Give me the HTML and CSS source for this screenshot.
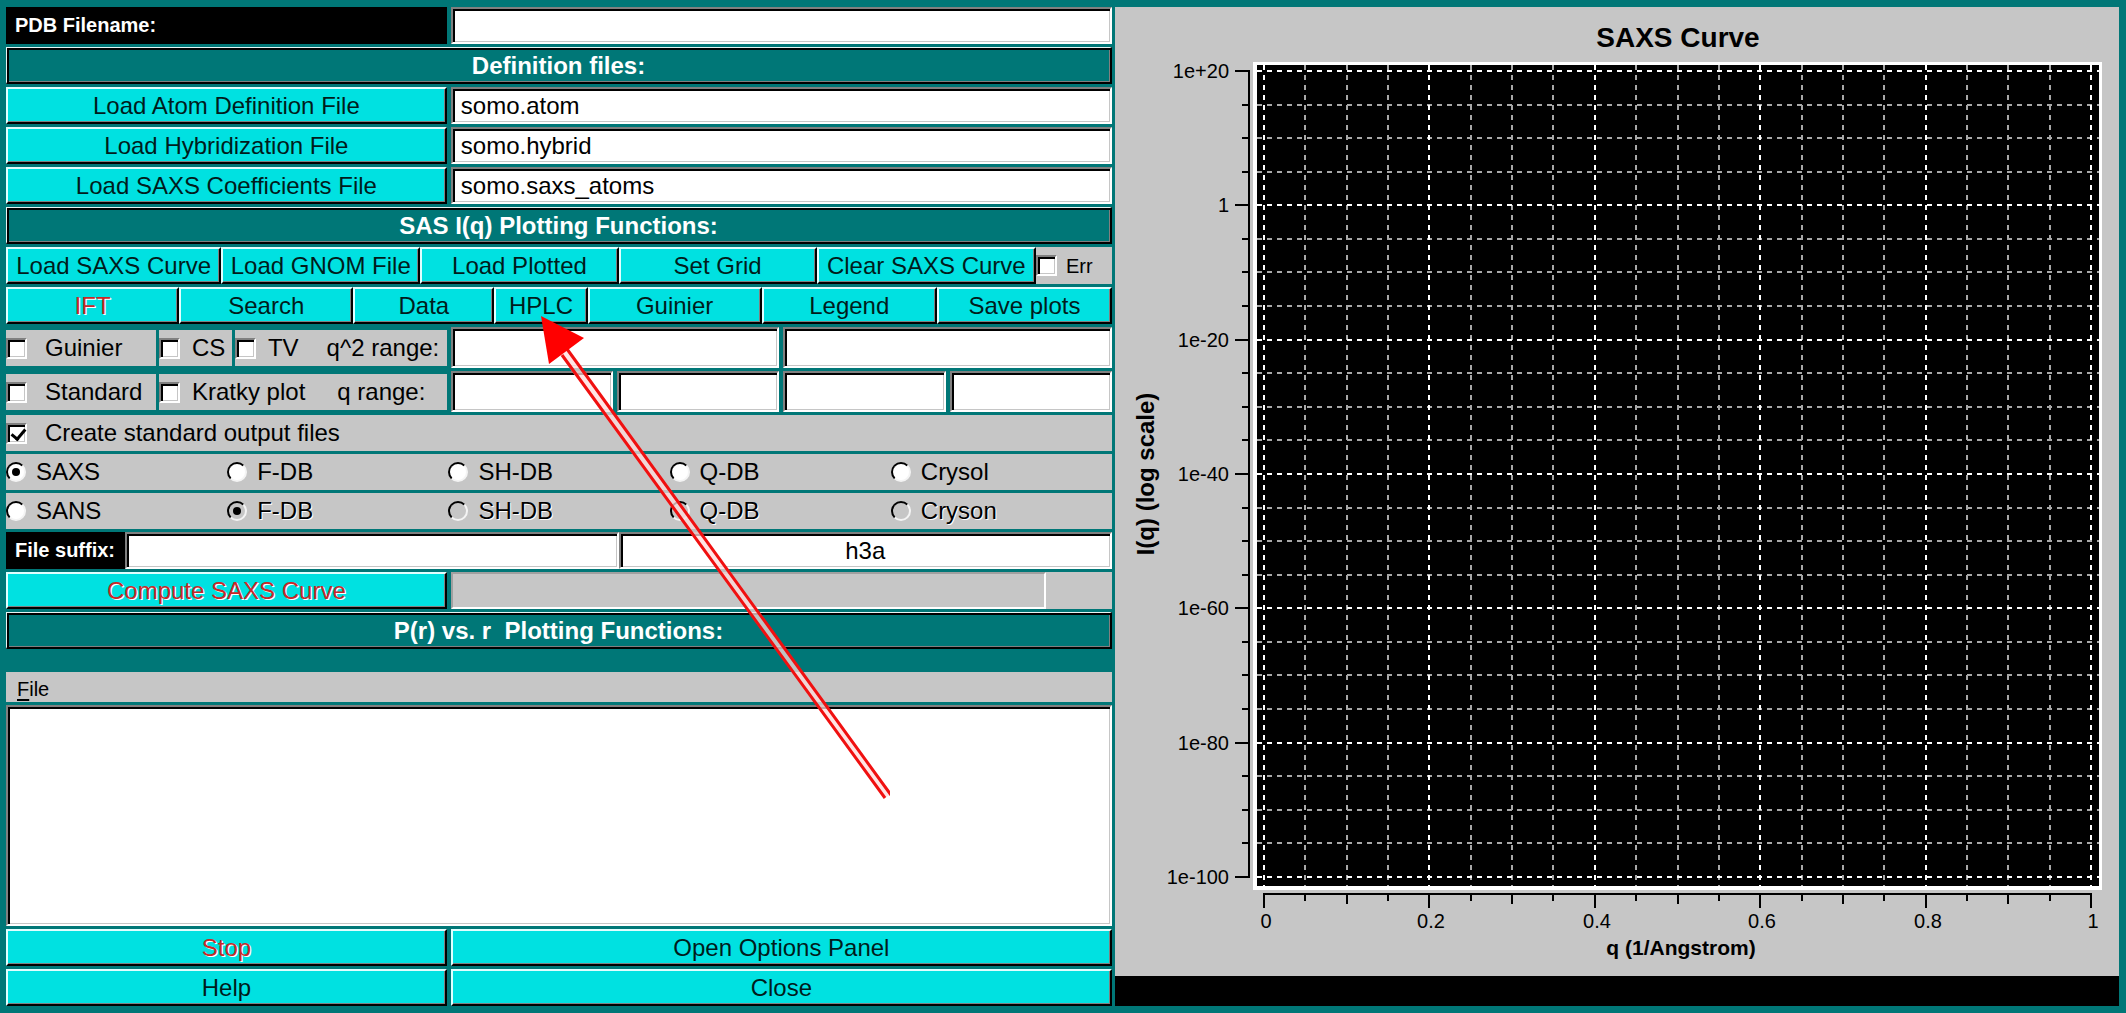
FILE: index.html
```html
<!DOCTYPE html>
<html lang="en">
<head>
<meta charset="utf-8">
<title>SAXS Plotting Functions</title>
<link rel="stylesheet" href="styles.css">
</head>
<body>
<main class="window">
  <form class="controls">
    <div class="row split">
      <label class="caption" for="pdb">PDB Filename:</label>
      <input class="field" id="pdb" type="text">
    </div>
    <h2 class="heading">Definition files:</h2>
    <div class="row split">
      <button class="btn" type="button">Load Atom Definition File</button>
      <input class="field" type="text" value="somo.atom" aria-label="Atom definition file">
    </div>
    <div class="row split">
      <button class="btn" type="button">Load Hybridization File</button>
      <input class="field" type="text" value="somo.hybrid" aria-label="Hybridization file">
    </div>
    <div class="row split">
      <button class="btn" type="button">Load SAXS Coefficients File</button>
      <input class="field" type="text" value="somo.saxs_atoms" aria-label="SAXS coefficients file">
    </div>
    <h2 class="heading">SAS I(q) Plotting Functions:</h2>
    <div class="row load-row">
      <button class="btn" type="button">Load SAXS Curve</button>
      <button class="btn" type="button">Load GNOM File</button>
      <button class="btn" type="button">Load Plotted</button>
      <button class="btn" type="button">Set Grid</button>
      <button class="btn" type="button">Clear SAXS Curve</button>
      <label class="cell err"><input class="check" type="checkbox">Err</label>
    </div>
    <div class="row tool-row">
      <button class="btn" type="button" disabled>IFT</button>
      <button class="btn" type="button">Search</button>
      <button class="btn" type="button">Data</button>
      <button class="btn" type="button">HPLC</button>
      <button class="btn" type="button">Guinier</button>
      <button class="btn" type="button">Legend</button>
      <button class="btn" type="button">Save plots</button>
    </div>
    <div class="row split range-row">
      <div class="options guinier">
        <label class="cell wide"><input class="check" type="checkbox">Guinier</label>
        <label class="cell"><input class="check" type="checkbox">CS</label>
        <div class="cell">
          <label class="tick"><input class="check" type="checkbox">TV</label>
          <label class="range" for="q2min">q^2 range:</label>
        </div>
      </div>
      <div class="fields two">
        <input class="field" id="q2min" type="text">
        <input class="field" type="text" aria-label="q^2 range maximum">
      </div>
    </div>
    <div class="row split range-row">
      <div class="options standard">
        <label class="cell wide"><input class="check" type="checkbox">Standard</label>
        <div class="cell">
          <label class="tick"><input class="check" type="checkbox">Kratky plot</label>
          <label class="range q" for="qmin">q range:</label>
        </div>
      </div>
      <div class="fields four">
        <input class="field" id="qmin" type="text">
        <input class="field" type="text" aria-label="q range maximum">
        <input class="field" type="text" aria-label="Second q range minimum">
        <input class="field" type="text" aria-label="Second q range maximum">
      </div>
    </div>
    <label class="cell wide strip"><input class="check" type="checkbox" checked>Create standard output files</label>
    <div class="strip radios">
      <label class="tick"><input class="radio" type="radio" name="mode" checked>SAXS</label>
      <label class="tick"><input class="radio" type="radio" name="saxs">F-DB</label>
      <label class="tick"><input class="radio" type="radio" name="saxs">SH-DB</label>
      <label class="tick"><input class="radio" type="radio" name="saxs">Q-DB</label>
      <label class="tick"><input class="radio" type="radio" name="saxs">Crysol</label>
    </div>
    <div class="strip radios">
      <label class="tick"><input class="radio" type="radio" name="mode">SANS</label>
      <label class="tick off"><input class="radio" type="radio" name="sans" checked disabled>F-DB</label>
      <label class="tick off"><input class="radio" type="radio" name="sans" disabled>SH-DB</label>
      <label class="tick off"><input class="radio" type="radio" name="sans" disabled>Q-DB</label>
      <label class="tick off"><input class="radio" type="radio" name="sans" disabled>Cryson</label>
    </div>
    <div class="row suffix-row">
      <label class="caption" for="suffix">File suffix:</label>
      <input class="field" id="suffix" type="text">
      <input class="field centered" type="text" value="h3a" aria-label="Computed suffix">
    </div>
    <div class="row split">
      <button class="btn" type="button" disabled>Compute SAXS Curve</button>
      <div class="progress"><div class="track"></div></div>
    </div>
    <h2 class="heading">P(r) vs. r&nbsp; Plotting Functions:</h2>
    <div class="menubar"><button class="menu" type="button"><u>F</u>ile</button></div>
    <textarea class="log" aria-label="Messages"></textarea>
    <div class="row split">
      <button class="btn" type="button" disabled>Stop</button>
      <button class="btn" type="button">Open Options Panel</button>
    </div>
    <div class="row split">
      <button class="btn" type="button">Help</button>
      <button class="btn" type="button">Close</button>
    </div>
  </form>
  <section class="plot">
    <svg class="chart" viewBox="0 0 1004 969" role="img" aria-label="SAXS Curve">
      <text class="chart-title" x="563" y="40">SAXS Curve</text>
      <rect x="138" y="55" width="849" height="828" fill="#fff"/>
      <rect x="142" y="58" width="842" height="821" fill="#000"/>
      <g id="grid"></g>
      <g id="axes"></g>
      <text class="axis-title" x="566" y="948">q (1/Angstrom)</text>
      <text class="axis-title tall" transform="translate(39 467) rotate(-90)">I(q) (log scale)</text>
    </svg>
    <div class="status"></div>
  </section>
  <svg class="arrow" width="360" height="490" viewBox="0 0 360 490" aria-hidden="true">
    <path d="M32 41L358 486" stroke="#ffdcdc" stroke-opacity=".75" stroke-width="8"/>
    <path d="M32 45L355 488M37 39L361 485" stroke="#f01010" stroke-width="3"/>
    <path d="M11 6L54 28L19 54Z" fill="#f00"/>
  </svg>
</main>
<script src="plot.js"></script>
</body>
</html>
```
FILE: styles.css
```css
* { box-sizing: border-box; }

body {
  margin: 0;
  background: #007777;
  color: #000;
  font: 24px/28px "Liberation Sans", Arial, sans-serif;
}

.window {
  position: relative;
  display: grid;
  grid-template-columns: minmax(0, 1106fr) minmax(0, 1004fr);
  gap: 3px;
  min-height: 100vh;
  padding: 7px 7px 7px 6px;
}

.controls {
  display: flex;
  flex-direction: column;
  gap: 3px;
}

button, input, textarea { font: inherit; color: inherit; margin: 0; }

.row { display: grid; height: 37px; }
.split { grid-template-columns: minmax(0, 2fr) minmax(0, 3fr); gap: 4px; }
.load-row { grid-template-columns: 215fr 199fr 198fr 198fr 219fr 76fr; }
.tool-row { grid-template-columns: 173fr 174fr 141fr 93fr 174fr 175fr 175fr; }
.range-row { height: 41px; }
.suffix-row { grid-template-columns: 119px minmax(0, 1fr) minmax(0, 1fr); }
.suffix-row .centered { text-align: center; }

.caption {
  padding: 0 9px;
  background: #000;
  color: #fff;
  font-size: 20px;
  font-weight: bold;
  line-height: 36px;
  white-space: nowrap;
}

.heading {
  margin: 0;
  height: 37px;
  border: 1px solid #000;
  border-color: #e8f4f4 #000 #000 #e8f4f4;
  border-width: 1px 2px 2px 1px;
  box-shadow: inset 2px 2px #000, inset -1px -1px #808080;
  color: #fff;
  font-size: 24px;
  line-height: 36px;
  text-align: center;
}

.btn {
  min-width: 0;
  padding: 0;
  border: 2px solid;
  border-color: #e0ffff #000 #000 #e0ffff;
  border-radius: 0;
  box-shadow: inset -1px -1px #808080;
  background: #00e1e1;
  color: #001c1c;
  line-height: 32px;
  white-space: nowrap;
}
.btn:disabled { color: #c82828; text-shadow: 1px 1px #fff; }

.field, .log {
  width: 100%;
  min-width: 0;
  border: 2px solid;
  border-color: #808080 #fff #fff #808080;
  border-radius: 0;
  box-shadow: inset 2px 2px #000, inset -1px -1px #c6c6c6;
  background: #fff;
  outline: 0;
}
.field { height: 100%; padding: 0 8px; }

.cell, .tick { display: flex; align-items: center; white-space: nowrap; }
.cell, .strip, .menubar, .progress { background: #c6c6c6; }
.cell, .tick { gap: 12px; }
.wide { gap: 18px; }
.err { gap: 9px; font-size: 20px; }

.options { display: grid; gap: 3px; margin: 3px 0 2px; }
.guinier { grid-template-columns: 150fr 73fr 212fr; }
.standard { grid-template-columns: 150fr 288fr; }
.range { margin-left: 16px; }
.q { margin-left: 20px; }

.fields { display: grid; gap: 4px; }
.two { grid-template-columns: repeat(2, minmax(0, 1fr)); }
.four { grid-template-columns: repeat(4, minmax(0, 1fr)); }

.strip { height: 36px; }
.radios { display: grid; grid-template-columns: repeat(5, 1fr); }
.radios .tick { gap: 10px; }
.off { text-shadow: 1px 1px #fff; }

.check, .radio { appearance: none; flex: none; }
.check {
  width: 21px;
  height: 21px;
  border: 2px solid;
  border-color: #808080 #fff #fff #808080;
  box-shadow: inset 2px 2px #000, inset -1px -1px #c6c6c6;
  background: #fff;
}
.check:checked::after {
  content: "";
  display: block;
  width: 6px;
  height: 11px;
  margin: 1px 0 0 6px;
  border: solid #000;
  border-width: 0 3px 3px 0;
  transform: rotate(40deg);
}
.radio {
  width: 20px;
  height: 20px;
  border: 2px solid;
  border-color: #000 #f4f4f4 #f4f4f4 #000;
  border-radius: 50%;
  background: #fff;
}
.radio:disabled { background: #c6c6c6; }
.radio:checked::after {
  content: "";
  display: block;
  width: 8px;
  height: 8px;
  margin: 4px;
  border-radius: 50%;
  background: #000;
}

.track {
  width: 90%;
  height: 100%;
  border: 2px solid;
  border-color: #a0a0a0 #fff #fff #a0a0a0;
}

.menubar { height: 30px; margin-top: 20px; }
.menu {
  padding: 0 11px;
  border: 0;
  background: none;
  font-size: 20px;
  line-height: 34px;
}
.menu u { text-underline-offset: 3px; }

.log { flex: 1; display: block; min-height: 120px; resize: none; }

.plot { display: flex; flex-direction: column; background: #c6c6c6; }
.chart {
  flex: 1;
  display: block;
  width: 100%;
  min-height: 0;
  font-size: 20px;
}
.chart-title, .axis-title { font-weight: bold; text-anchor: middle; }
.chart-title { font-size: 28px; }
.axis-title { font-size: 21px; }
.tall { font-size: 24px; }
.status { height: 30px; background: #000; }

.arrow {
  position: absolute;
  left: 530px;
  top: 310px;
  pointer-events: none;
}
```
FILE: plot.js
```js
const NS = "http://www.w3.org/2000/svg";
const area = { left: 142, right: 984, top: 58, bottom: 879 };
const xAt = i => Math.round(149 + i * 41.35);
const yAt = i => Math.round(64 + i * 33.58);

function add(parent, name, attrs, text) {
  const el = document.createElementNS(NS, name);
  for (const key in attrs) el.setAttribute(key, attrs[key]);
  if (text) el.textContent = text;
  parent.appendChild(el);
}

const grid = document.getElementById("grid");
const axes = document.getElementById("axes");

function gridLine(d, major) {
  add(grid, "path", {
    d, stroke: major ? "#fff" : "#a8a8a8", "stroke-width": 2, "stroke-dasharray": "5 5"
  });
}

// Minor lines go in first so that the major ones lie on top.
for (const major of [false, true]) {
  for (let i = 0; i <= 20; i++)
    if ((i % 4 === 0) === major) gridLine(`M${xAt(i)} ${area.top}V${area.bottom}`, major);
  for (let i = 0; i <= 24; i++)
    if ((i % 4 === 0) === major) gridLine(`M${area.left} ${yAt(i)}H${area.right}`, major);
}

let ticks = `M134 ${yAt(0) - 1}V${yAt(24) + 1}M${xAt(0) - 1} 887H${xAt(20) + 1}`;
for (let i = 0; i <= 20; i++)
  ticks += `M${xAt(i)} 887V${i % 4 === 0 ? 901 : i % 2 === 0 ? 897 : 894}`;
for (let i = 0; i <= 24; i++)
  ticks += `M134 ${yAt(i)}H${i % 4 === 0 ? 120 : 127}`;
add(axes, "path", { d: ticks, stroke: "#000", "stroke-width": 2, fill: "none" });

["0", "0.2", "0.4", "0.6", "0.8", "1"].forEach((t, i) =>
  add(axes, "text", { x: xAt(i * 4) + 2, y: 921, "text-anchor": "middle" }, t));
["1e+20", "1", "1e-20", "1e-40", "1e-60", "1e-80", "1e-100"].forEach((t, i) =>
  add(axes, "text", { x: 114, y: yAt(i * 4) + 7, "text-anchor": "end" }, t));
```
